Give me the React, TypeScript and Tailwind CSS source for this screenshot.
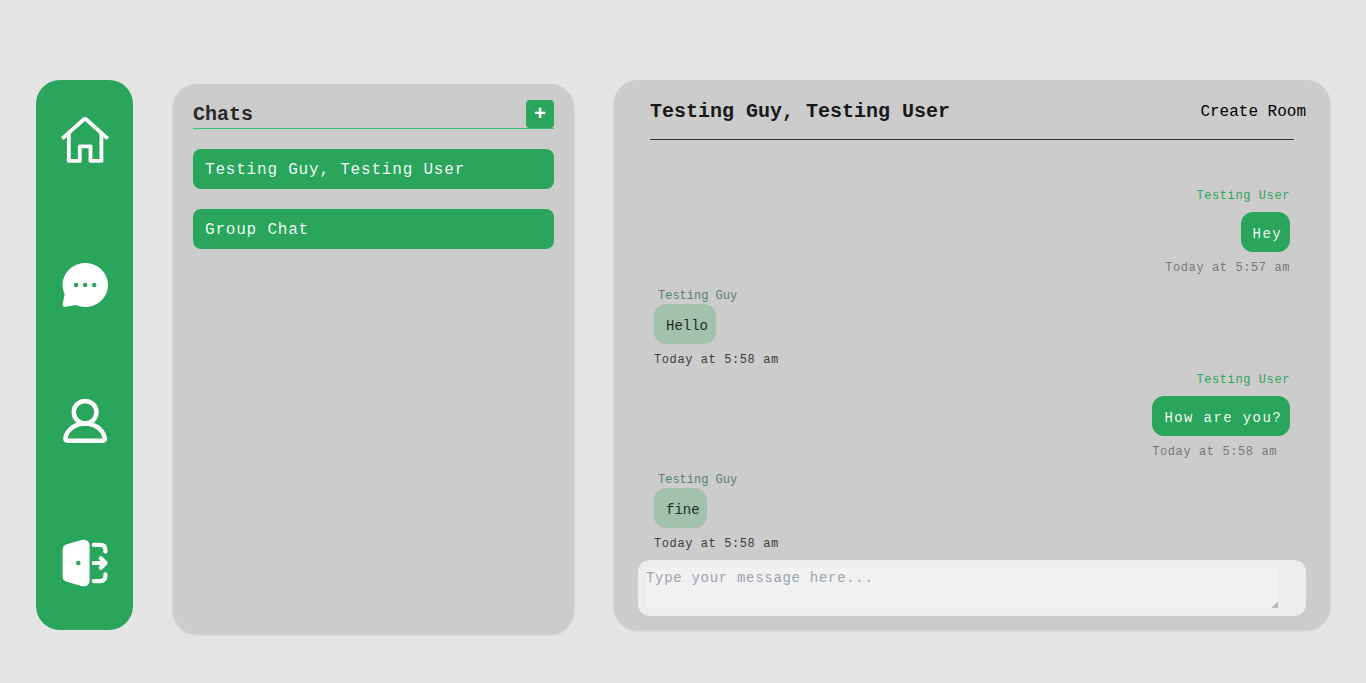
import React from "react";

function HomeIcon() {
  return (
    <svg className="h-12 w-12" viewBox="0 0 48 48" fill="none" stroke="#fff" strokeWidth="3.8" strokeLinejoin="round">
      <path d="M1.2 22.7 22.7 3.5Q24 2.4 25.3 3.5L46.8 22.7" />
      <path d="M7.8 17.5V44.9H18.8V30.4H29.5V44.9H40.4V17.5" />
    </svg>
  );
}

function ChatIcon() {
  return (
    <svg className="h-12 w-12" viewBox="0 0 48 48">
      <path
        fill="#fff"
        d="M24.4 2C36.9 2 47 11.8 47 24S36.9 46 24.4 46C21 46 17.8 45.3 14.9 44L4.6 45.8C2.5 46.2 1.4 45 1.7 43L3.7 33C2.3 30 1.6 27 1.6 24 1.6 11.8 11.9 2 24.4 2Z"
      />
      <g fill="#29a55c">
        <circle cx="15.1" cy="24" r="2.3" />
        <circle cx="24.1" cy="24" r="2.3" />
        <circle cx="33.2" cy="24" r="2.3" />
      </g>
    </svg>
  );
}

function UserIcon() {
  return (
    <svg className="h-12 w-12" viewBox="0 0 48 48" fill="none" stroke="#fff" strokeWidth="4.5">
      <circle cx="24.1" cy="15.2" r="11.3" />
      <path d="M6.6 43.7H41.6Q44.2 43.7 43.7 41.1C42.3 33 34.5 26.5 24.1 26.5S5.8 33 4.4 41.1Q4 43.7 6.6 43.7Z" />
    </svg>
  );
}

function ExitIcon() {
  return (
    <svg className="h-12 w-12" viewBox="0 0 48 48" fill="none" stroke="#fff" strokeWidth="4.2" strokeLinecap="round" strokeLinejoin="round">
      <path
        fill="#fff"
        stroke="none"
        d="M5.8 5.2 20.4.9C25 -.2 28.6 2.3 28.6 6.6V41.4C28.6 45.7 25 48.2 20.4 47.1L5.8 42.8C3 41.9 1.6 40 1.6 37.2V10.8C1.6 8 3 6.1 5.8 5.2Z"
      />
      <circle cx="17.3" cy="24" r="2.3" fill="#29a55c" stroke="none" />
      <path d="M32.8 5.9H39Q44.4 5.9 44.4 11.2V12.7M32.8 42.1H39Q44.4 42.1 44.4 36.8V35.3" />
      <path d="M32.8 24H44M39.8 19.2 44.6 24 39.8 28.8" />
    </svg>
  );
}

function Sent({ text, time, early }: { text: string; time: string; early?: boolean }) {
  return (
    <div className="flex h-[92px] flex-col items-end text-xs tracking-[0.6px]">
      <div className="h-6 leading-4 text-[#29a55c]">Testing User</div>
      <div className="h-10 rounded-xl bg-[#29a55c] pt-3 pr-2 pl-3 text-sm leading-5 tracking-[1.4px] text-white/95">{text}</div>
      <div className={early ? "mt-2 mr-[13px] leading-4 text-[#777777]" : "mt-2 leading-4 text-[#777777]"}>{time}</div>
    </div>
  );
}

function Received({ text, time }: { text: string; time: string }) {
  return (
    <div className="flex h-[92px] flex-col items-start pt-2 text-xs">
      <div className="ml-1 h-4 leading-4 text-[#568069]">Testing Guy</div>
      <div className="h-10 rounded-xl bg-[#a3c1af] pt-3 pr-[7.6px] pl-3 text-sm leading-5 text-[#222c26]">{text}</div>
      <div className="mt-2 leading-4 tracking-[0.6px] text-[#3b3b3b]">{time}</div>
    </div>
  );
}

export default function App() {
  return (
    <div className="flex h-[683px] w-[1366px] items-start overflow-hidden bg-[#e5e5e5] pt-20 pl-9 font-['Liberation_Mono',monospace]">
      <nav className="flex h-[550px] w-[97px] flex-col rounded-3xl bg-[#29a55c] pt-9 pl-[25px]">
        <HomeIcon />
        <div className="mt-[97px]"><ChatIcon /></div>
        <div className="mt-[88px]"><UserIcon /></div>
        <div className="mt-[94px]"><ExitIcon /></div>
      </nav>

      <section className="mt-1 ml-10 h-[550px] w-[401px] rounded-3xl bg-[#cccccc] px-5 pt-4 shadow-sm">
        <div className="flex h-[29px] justify-between border-b border-[#38c172]">
          <h2 className="pt-px text-xl leading-7 font-bold text-[#292929]">Chats</h2>
          <button className="h-7 w-7 rounded bg-[#29a55c] pt-px text-xl leading-7 font-bold text-white">+</button>
        </div>
        <div className="mt-5 flex flex-col gap-5 text-base leading-6 tracking-[0.8px] text-white/95">
          <div className="h-10 rounded-lg bg-[#29a55c] px-3 pt-[9px]">Testing Guy, Testing User</div>
          <div className="h-10 rounded-lg bg-[#29a55c] px-3 pt-[9px]">Group Chat</div>
        </div>
      </section>

      <main className="ml-10 h-[550px] w-[716px] rounded-3xl bg-[#cccccc] px-6 shadow-sm">
        <header className="flex h-[59px] items-start justify-between pl-3">
          <h1 className="pt-[18px] text-xl leading-7 font-bold text-[#191919]">Testing Guy, Testing User</h1>
          <span className="pt-5 text-base leading-6 text-black">Create Room</span>
        </header>
        <div className="mx-3 h-px bg-[#333333]" />
        <div className="h-[420px] pt-12 pr-4 pl-4">
          <Sent text="Hey" time="Today at 5:57 am" />
          <Received text="Hello" time="Today at 5:58 am" />
          <Sent text="How are you?" time="Today at 5:58 am" early />
          <Received text="fine" time="Today at 5:58 am" />
        </div>
        <div className="h-14 rounded-xl bg-[#ededed] p-2">
          <div className="relative h-10 w-[632px]">
            <textarea
              className="block h-10 w-full resize-none bg-[#f1f1f1] text-sm leading-5 tracking-[0.7px] outline-none placeholder:text-[#9ca3af]"
              placeholder="Type your message here..."
            />
            <svg className="absolute right-0 bottom-0 h-1.5 w-1.5" viewBox="0 0 6 6" shapeRendering="crispEdges">
              <path d="M0 6 6 0V6Z" fill="#c4c4c4" />
              <path d="M0 6 6 0M3 6 6 3" stroke="#9a9a9a" strokeWidth="0.8" />
            </svg>
          </div>
        </div>
      </main>
    </div>
  );
}
